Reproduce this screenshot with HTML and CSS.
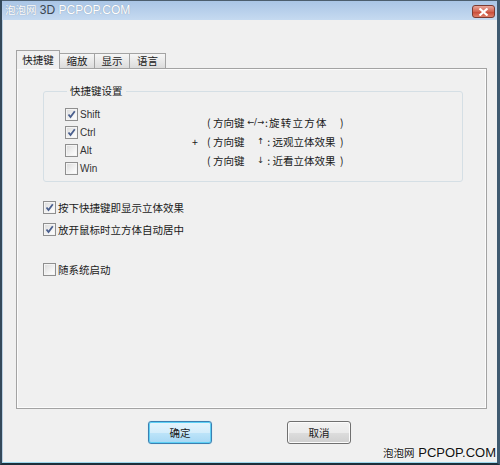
FILE: index.html
```html
<!DOCTYPE html>
<html lang="zh-CN">
<head>
    <meta charset="UTF-8">
    <title>3D 立方体设置</title>
    <link rel="stylesheet" href="styles.css">
</head>
<body>
    <div class="window">
        <div class="titlebar">
            <span class="title"><span class="wm-cn">泡泡网</span> <span class="dark">3D</span> PCPOP.COM</span>
            <span class="close">
                <svg width="11" height="8" viewBox="0 0 11 8"><path d="M1.5 0.5 L9.5 7.5 M9.5 0.5 L1.5 7.5" stroke="#fff" stroke-width="2.2" fill="none"/></svg>
            </span>
        </div>
        <div class="client">
            <div class="tabs">
                <div class="tab active">快捷键</div>
                <div class="tab">缩放</div>
                <div class="tab">显示</div>
                <div class="tab last">语言</div>
            </div>
            <div class="panel">
                <fieldset class="group">
                    <legend>快捷键设置</legend>
                    <div class="group_body">
                        <div class="keys">
                            <label class="check"><span class="box on"></span>Shift</label>
                            <label class="check"><span class="box on"></span>Ctrl</label>
                            <label class="check"><span class="box"></span>Alt</label>
                            <label class="check"><span class="box"></span>Win</label>
                        </div>
                        <div class="plus">+</div>
                        <div class="lines">
                            <div class="line"><span class="pre">( 方向键</span><span class="arr">←/→</span><span class="txt wide">:旋转立方体</span><span class="end">)</span></div>
                            <div class="line"><span class="pre">( 方向键</span><span class="arr">↑</span><span class="txt">&nbsp;: 远观立体效果</span><span class="end">)</span></div>
                            <div class="line"><span class="pre">( 方向键</span><span class="arr">↓</span><span class="txt">&nbsp;: 近看立体效果</span><span class="end">)</span></div>
                        </div>
                    </div>
                </fieldset>
                <div class="opts">
                    <label class="check opt"><span class="box on"></span>按下快捷键即显示立体效果</label>
                    <label class="check opt"><span class="box on"></span>放开鼠标时立方体自动居中</label>
                    <label class="check opt far"><span class="box"></span>随系统启动</label>
                </div>
            </div>
            <div class="buttons">
                <button class="btn default">确定</button>
                <button class="btn">取消</button>
            </div>
        </div>
        <!-- 水印 -->
        <div class="mark"><span class="wm-cn">泡泡网</span> PCPOP.COM</div>
    </div>
</body>
</html>
```
FILE: styles.css
```css
*{
    margin: 0px;
    padding: 0px;
}
body{
    font-family: "Noto Sans CJK SC", sans-serif;
    font-size: 10.5px;
    color: #1a1a1a;
}
.window{
    width: 500px;
    height: 465px;
    box-sizing: border-box;
    background: #f0f0f0;
    border-left: 2px solid #34495a;
    border-right: 3px solid #3f5a70;
    border-bottom: 2px solid #1d2e3a;
    box-shadow: inset 0 -1px 0 #9cd6ec, inset 1px 0 0 #b9cfe2;
    display: flex;
    flex-direction: column;
    position: relative;
}
.titlebar{
    height: 20px;
    box-sizing: border-box;
    border-top: 1px solid #4c5e6e;
    background: linear-gradient(#a9c5e6, #c6daf0);
    display: flex;
    justify-content: space-between;
    align-items: flex-start;
}
.title{
    margin: 1px 0 0 3px;
    font-family: "Liberation Sans", "Noto Sans CJK SC", sans-serif;
    font-size: 12px;
    line-height: 16px;
    color: #fff;
    text-shadow: 0 0 1px #7d90a6;
    white-space: nowrap;
}
.title .dark{
    color: #3a4650;
    text-shadow: none;
}
.wm-cn{
    font-family: "Noto Sans CJK SC", sans-serif;
    font-size: 10.5px;
}
.close{
    width: 23px;
    height: 13px;
    box-sizing: border-box;
    margin: 4px 2px 0 0;
    border: 1px solid #7b3b32;
    border-radius: 3px;
    background: linear-gradient(#eaa79b, #d26553 50%, #c64634 51%, #e0806a);
    display: flex;
    align-items: center;
    justify-content: center;
}
.client{
    flex: 1;
    display: flex;
    flex-direction: column;
}
.tabs{
    margin: 30px 0 0 14px;
    height: 18px;
    display: flex;
    align-items: flex-end;
}
.tab{
    width: 35px;
    height: 15px;
    box-sizing: border-box;
    border: 1px solid #a3a3a3;
    border-bottom: none;
    border-left: none;
    background: linear-gradient(#f6f6f6, #dcdcdc);
    text-align: center;
    line-height: 14px;
}
.tab.active{
    width: 44px;
    height: 19px;
    margin-bottom: -1px;
    border-left: 1px solid #a3a3a3;
    background: #f0f0f0;
    line-height: 18px;
    position: relative;
    z-index: 1;
}
.tab.last{
    width: 36px;
}
.panel{
    margin-left: 14px;
    width: 471px;
    height: 341px;
    box-sizing: border-box;
    border: 1px solid #a3a3a3;
    box-shadow: inset 0 0 0 1px #fcfcfc;
    padding-left: 26px;
}
.group{
    margin-top: 15px;
    width: 420px;
    box-sizing: border-box;
    border: 1px solid #d5dfe5;
    border-radius: 3px;
    padding: 7px 0 4px 21px;
}
.group legend{
    margin-left: 2px;
    padding: 0 3px;
    line-height: 14px;
}
.group_body{
    display: flex;
    align-items: center;
}
.keys{
    width: 127px;
}
.check{
    height: 18px;
    display: flex;
    align-items: center;
    gap: 2px;
}
.keys .check{
    font-family: "Liberation Sans", sans-serif;
    font-size: 10px;
    color: #333;
}
.box{
    width: 13px;
    height: 13px;
    box-sizing: border-box;
    border: 1px solid #8f8f8f;
    background: linear-gradient(135deg, #d9d9d9, #f7f7f7 70%, #fff);
    box-shadow: inset 0 0 0 1px #f4f4f4;
}
.box.on{
    background: url("data:image/svg+xml,%3Csvg xmlns='http://www.w3.org/2000/svg' width='11' height='11'%3E%3Cpath d='M2.5 5.5 L4.5 8 L8.8 2.2' stroke='%234a5f8e' stroke-width='1.8' fill='none'/%3E%3C/svg%3E") center no-repeat, linear-gradient(135deg, #d9d9d9, #f7f7f7 70%, #fff);
}
.plus{
    width: 15px;
}
.lines{
    line-height: 19px;
}
.line{
    display: grid;
    grid-template-columns: 38px 20px 75px auto;
    white-space: nowrap;
}
.arr{
    font-family: "DejaVu Sans", sans-serif;
    font-size: 8.5px;
    text-align: right;
    padding-right: 1px;
    color: #222;
}
.txt.wide{
    letter-spacing: 1.2px;
}
.opts{
    margin-top: 16px;
}
.opt + .opt{
    margin-top: 4px;
}
.opt.far{
    margin-top: 22px;
}
.buttons{
    margin-top: 12px;
    display: flex;
    justify-content: center;
    gap: 75px;
}
.btn{
    width: 64px;
    height: 23px;
    box-sizing: border-box;
    border: 1px solid #707070;
    border-radius: 3px;
    background: linear-gradient(#f2f2f2, #ebebeb 50%, #dddddd 51%, #cfcfcf);
    box-shadow: inset 0 0 0 1px #fbfbfb;
    font-family: "Noto Sans CJK SC", sans-serif;
    font-size: 10.5px;
    color: #1a1a1a;
}
.btn.default{
    border-color: #3c7fb1;
    background: linear-gradient(#e5f4fc, #d4edfb 50%, #bde4f9 51%, #a7d8f4);
    box-shadow: inset 0 0 0 1px #5dd0f5, 0 0 1px #8fd3f0;
}
.mark{
    position: absolute;
    right: 1px;
    bottom: 3px;
    font-family: "Liberation Sans", "Noto Sans CJK SC", sans-serif;
    font-size: 13px;
    line-height: 14px;
    color: #111;
    text-shadow: 0 0 2px #fff;
}
```
